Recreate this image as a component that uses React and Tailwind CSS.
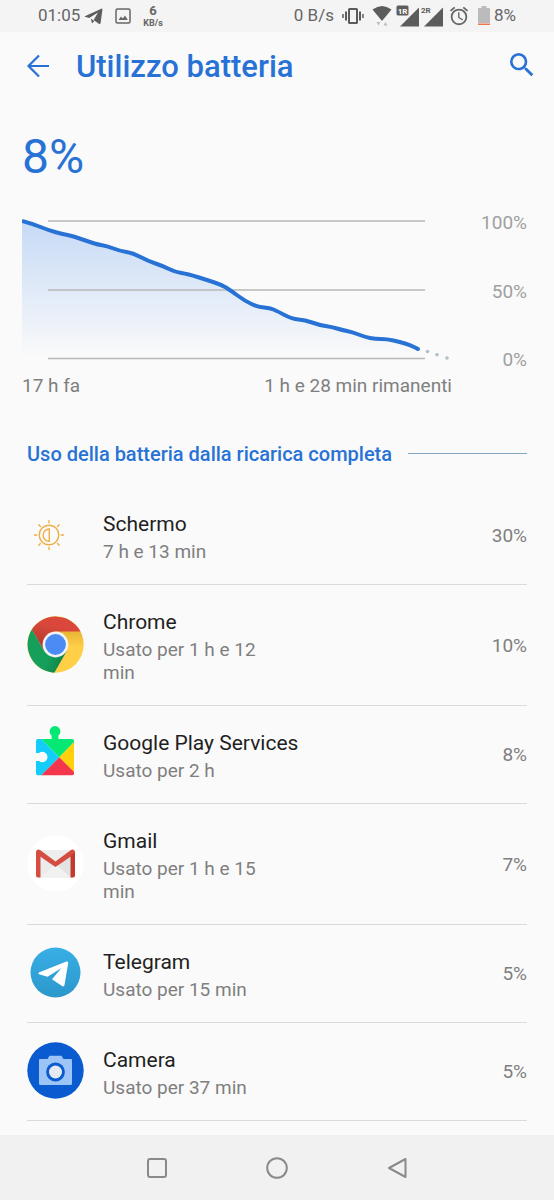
import { MdOutlineAlarm, MdSearch } from 'react-icons/md'

const LEVELS = [
  [0, 4], [11, 7], [26, 13], [40, 17], [51, 19], [73, 27], [85, 29], [98, 34],
  [111, 36], [126, 44], [141, 49], [153, 55], [166, 57], [185, 63], [200, 68],
  [208, 73], [223, 84], [236, 90], [248, 91], [255, 94], [270, 102], [283, 103],
  [297, 108], [310, 110], [320, 113], [330, 115], [343, 120], [353, 122],
  [365, 122], [378, 125], [388, 128], [396, 132],
]

// rounds the corners by curving through the midpoint of each pair of samples
function smoothPath(points) {
  let d = `M${points[0].join(' ')}`
  for (let i = 1; i < points.length - 1; i++) {
    const [x, y] = points[i]
    const [nx, ny] = points[i + 1]
    d += ` Q${x} ${y} ${(x + nx) / 2} ${(y + ny) / 2}`
  }
  return `${d} L${points[points.length - 1].join(' ')}`
}

function ScreenIcon() {
  return (
    <svg viewBox="0 0 44 44" className="w-11 h-11" fill="none" stroke="#eeae45" strokeWidth="1.4" strokeLinecap="round">
      <circle cx="22" cy="22" r="9.8" />
      <path d="M22.3 16v12.4A6.2 6.2 0 0 1 22.3 16z" />
      <path d="M22 7.5v2.3M22 34.2v2.3M7.5 22h2.3M34.2 22h2.3M11.8 11.8l1.6 1.6M30.6 30.6l1.6 1.6M11.8 32.2l1.6-1.6M30.6 13.4l1.6-1.6" />
    </svg>
  )
}

function ChromeIcon() {
  return (
    <svg viewBox="0 0 57 57" className="w-[57px] h-[57px]">
      <defs>
        <linearGradient id="chromeRed" x1="0" y1="1" x2="0.3" y2="0.2">
          <stop offset="0" stopColor="#a8352b" />
          <stop offset="1" stopColor="#da483b" />
        </linearGradient>
        <linearGradient id="chromeGreen" x1="1" y1="0.75" x2="0.55" y2="0.55">
          <stop offset="0" stopColor="#0c7f46" />
          <stop offset="1" stopColor="#169f5b" />
        </linearGradient>
        <linearGradient id="chromeYellow" x1="0" y1="0.27" x2="0" y2="0.55">
          <stop offset="0" stopColor="#e9b535" />
          <stop offset="1" stopColor="#ffcf48" />
        </linearGradient>
      </defs>
      <circle cx="28.5" cy="28.5" r="28.2" fill="url(#chromeYellow)" />
      <path d="M4.9 13.6A28.2 28.2 0 0 1 53.5 15.5H28.5v13L17.2 35z" fill="url(#chromeRed)" />
      <path d="M4.9 13.6 17.2 35l11.3-6.5L39.8 35 27.3 56.7A28.2 28.2 0 0 1 4.9 13.6z" fill="url(#chromeGreen)" />
      <circle cx="28.5" cy="28.5" r="12.9" fill="#f3f3f3" />
      <circle cx="28.5" cy="28.5" r="10.4" fill="#4b8bf4" />
    </svg>
  )
}

function PlayServicesIcon() {
  return (
    <svg viewBox="0 0 57 57" className="w-[57px] h-[57px]">
      <clipPath id="puzzle">
        <path d="M11 14h13.6v-3.4a5.4 5.4 0 1 1 6.8 0V14H45a2 2 0 0 1 2 2v32.5a2 2 0 0 1-2 2H11a2 2 0 0 1-2-2V36h3a5.2 5.2 0 1 0 0-8H9V16a2 2 0 0 1 2-2z" />
      </clipPath>
      <g clipPath="url(#puzzle)">
        <path d="M9 14h5.3L32.3 32.3 14 50.5H9z" fill="#12cdfa" />
        <path d="M14.3 14V0H47v17.3l-14.7 15z" fill="#05e874" />
        <path d="M47 17v30.5L32.3 32.3z" fill="#ffd00b" />
        <path d="M32.3 32.3 47 47v3.5H14z" fill="#f3364b" />
      </g>
    </svg>
  )
}

function GmailIcon() {
  return (
    <svg viewBox="0 0 57 57" className="w-[57px] h-[57px]">
      <circle cx="28.5" cy="28.5" r="28.2" fill="#fff" />
      <path d="M11 15h35v27.5H11z" fill="#e3e3e3" />
      <path d="M13 42.5 28.5 29 44 42.5z" fill="#f1f1f1" />
      <path d="M13 20v22.5L25 31.5z" fill="#ececec" />
      <path d="M13 15h31L28.5 26.5z" fill="#ededed" />
      <path d="M9 17a2.5 2.5 0 0 1 4-2l15.5 11.5L44 15a2.5 2.5 0 0 1 4 2c0 1-.4 1.8-1.2 2.4L28.5 32 10.2 19.4C9.4 18.8 9 18 9 17z" fill="#d54c40" />
      <path d="M9 17v23.5a2 2 0 0 0 2 2h2.5V21z" fill="#d54c40" />
      <path d="M48 17v23.5a2 2 0 0 1-2 2h-2.5V21z" fill="#c13b31" />
    </svg>
  )
}

function TelegramIcon() {
  return (
    <svg viewBox="0 0 57 57" className="w-[57px] h-[57px]">
      <defs>
        <linearGradient id="telegram" x1="0" y1="0" x2="0" y2="1">
          <stop offset="0" stopColor="#38afe6" />
          <stop offset="1" stopColor="#2b97cb" />
        </linearGradient>
      </defs>
      <circle cx="28.5" cy="28.5" r="25" fill="url(#telegram)" />
      <path d="M11.8 28.6 39.4 17.6q2-.6 1.8 1.4L37.5 41q-.6 2.2-2.5 1.1L25 35.2l9.5-11.3-14 8.9-8.5-2.6q-1.3-.7-.2-1.6z" fill="#fff" />
    </svg>
  )
}

function CameraIcon() {
  return (
    <svg viewBox="0 0 57 57" className="w-[57px] h-[57px]">
      <circle cx="28.5" cy="28.5" r="28.2" fill="#0a5bd0" />
      <path d="M13 17h7.5l2-3.3h12l2 3.3H44q1 0 1 1v23.5q0 1.5-1.5 1.5h-30Q12 43 12 41.5V18q0-1 1-1z" fill="#9cc4f6" />
      <circle cx="28.5" cy="30" r="9.4" fill="#0a5bd0" />
      <circle cx="28.5" cy="30" r="6.5" fill="#e6eaee" />
    </svg>
  )
}

const APPS = [
  { name: 'Schermo', usage: '7 h e 13 min', percent: '30%', Icon: ScreenIcon },
  { name: 'Chrome', usage: 'Usato per 1 h e 12 min', percent: '10%', Icon: ChromeIcon },
  { name: 'Google Play Services', usage: 'Usato per 2 h', percent: '8%', Icon: PlayServicesIcon },
  { name: 'Gmail', usage: 'Usato per 1 h e 15 min', percent: '7%', Icon: GmailIcon },
  { name: 'Telegram', usage: 'Usato per 15 min', percent: '5%', Icon: TelegramIcon },
  { name: 'Camera', usage: 'Usato per 37 min', percent: '5%', Icon: CameraIcon },
]

function StatusBar() {
  return (
    <div className="h-8 px-[38px] bg-[#f4f4f4] text-[#666666] text-[17px] flex items-center justify-between">
      <div className="flex items-center">
        <span>01:05</span>
        <svg viewBox="0 0 19 17" className="ml-1 w-[19px] h-[17px]" fill="#5c5c5c">
          <path d="M.3 8.500 17.300.700q1.300-.4 1.100 1L16.600 15q-.4 1.600-1.800.8L9.600 11.900 14 4.500 5.200 9.900z" />
          <path d="M6.800 10.500 8 15.500l2.300-2.500z" />
        </svg>
        <svg viewBox="0 0 16 16" className="ml-3 w-4 h-4" fill="none" stroke="#666666" strokeWidth="1.5">
          <rect x="1" y="1" width="14" height="14" rx="1.5" />
          <path d="M3.5 12 6 8.5l1.800 2L10 7.5l2.800 4.500z" fill="#666666" stroke="none" />
        </svg>
        <div className="ml-3 flex flex-col items-center font-bold">
          <span className="text-[13px] leading-[14px]">6</span>
          <span className="text-[9px] leading-[10px]">KB/s</span>
        </div>
      </div>

      <div className="flex items-center">
        <span>0 B/s</span>
        <svg viewBox="0 0 22 16" className="ml-2 w-[22px] h-4" fill="none" stroke="#5c5c5c" strokeWidth="2">
          <rect x="7" y="1" width="8" height="14" rx="0.5" />
          <path d="M4 3.5v9M18 3.5v9" />
          <path d="M1 6v4M21 6v4" strokeWidth="1.5" />
        </svg>
        <svg viewBox="0 0 20 22" className="ml-2 w-5 h-[22px]">
          <path d="M.5 4.500Q10-2.500 19.500 4.500L10 16z" fill="#5c5c5c" />
          <path d="M4.500 17h4l-2 3.500zM11.500 20.500h4l-2-3.500z" fill="#bdbdbd" />
        </svg>
        <svg viewBox="0 0 24 22" className="ml-1 w-6 h-[22px]">
          <path d="M23 2.500V21.500H4z" fill="#5c5c5c" />
          <rect x="0" y="0" width="13" height="11" rx="2" fill="#5c5c5c" stroke="#f4f4f4" />
          <text x="6.5" y="8.5" textAnchor="middle" fontSize="8" fontWeight="700" fill="#ffffff">1R</text>
        </svg>
        <svg viewBox="0 0 24 22" className="w-6 h-[22px]">
          <path d="M23 2.500V21.500H4z" fill="#5c5c5c" />
          <text x="1" y="7.5" fontSize="8" fontWeight="700" fill="#5c5c5c" stroke="#f4f4f4" strokeWidth="1.5" paintOrder="stroke">2R</text>
        </svg>
        <MdOutlineAlarm className="ml-1 w-[22px] h-[22px]" />
        <svg viewBox="0 0 12 20" className="ml-2 w-3 h-5">
          <path d="M3.500 0h5v2H11q1 0 1 1v14H0V3q0-1 1-1h2.500z" fill="#bbbbbb" />
          <path d="M0 17.500h12V19H0z" fill="#f0734d" />
        </svg>
        <span className="ml-1">8%</span>
      </div>
    </div>
  )
}

function BatteryChart() {
  const line = smoothPath(LEVELS)
  return (
    <div className="grid grid-cols-[1fr_75px] text-[19px] leading-[22px]">
      <svg viewBox="0 -5 430 159" className="w-full h-auto">
        <defs>
          <linearGradient id="level" gradientUnits="userSpaceOnUse" x1="0" y1="4" x2="0" y2="140">
            <stop offset="0" stopColor="#c6daf6" />
            <stop offset="1" stopColor="#fafafa" />
          </linearGradient>
        </defs>
        <path d={`${line} V140 H0 Z`} fill="url(#level)" />
        <path d="M26 4h377M26 73h377M26 141.5h377" stroke="#b8b8b8" strokeWidth="1.4" />
        <path d={line} fill="none" stroke="#2872d6" strokeWidth="4" strokeLinejoin="round" />
        <circle cx="396" cy="132" r="2" fill="#2872d6" />
        <g fill="#b3c0c6">
          <circle cx="405.5" cy="134.5" r="1.8" />
          <circle cx="415" cy="137.8" r="1.8" />
          <circle cx="425" cy="141" r="1.8" />
        </g>
      </svg>
      <div className="flex flex-col justify-between text-right text-[#a0a0a0]">
        <span>100%</span>
        <span>50%</span>
        <span>0%</span>
      </div>
      <div className="mt-1 flex justify-between text-[#7f7f7f]">
        <span>17 h fa</span>
        <span>1 h e 28 min rimanenti</span>
      </div>
    </div>
  )
}

function AppRow({ name, usage, percent, Icon }) {
  return (
    <li className="flex items-center border-b border-[#dadada] pt-[23px] pb-[21px]">
      <div className="w-[76px] -mt-5 -mb-4 shrink-0">
        <Icon />
      </div>
      <div className="flex-1">
        <h3 className="text-[21px] leading-7 text-[#1f1f1f]">{name}</h3>
        <p className="mt-0.5 max-w-[180px] text-[19px] leading-[23px] text-[#7f7f7f]">{usage}</p>
      </div>
      <span className="text-[19px] text-[#7f7f7f]">{percent}</span>
    </li>
  )
}

function NavBar() {
  return (
    <nav className="h-[65px] bg-[#f1f1f1] flex items-center justify-center gap-20">
      <button aria-label="Recenti" className="w-10 h-10 flex items-center justify-center">
        <svg viewBox="0 0 24 24" className="w-6 h-6" fill="none" stroke="#8a8a8a" strokeWidth="2">
          <rect x="3" y="3" width="18" height="18" rx="2" />
        </svg>
      </button>
      <button aria-label="Home" className="w-10 h-10 flex items-center justify-center">
        <svg viewBox="0 0 24 24" className="w-6 h-6" fill="none" stroke="#8a8a8a" strokeWidth="2">
          <circle cx="12" cy="12" r="9.8" />
        </svg>
      </button>
      <button aria-label="Indietro" className="w-10 h-10 flex items-center justify-center">
        <svg viewBox="0 0 24 24" className="w-6 h-6" fill="none" stroke="#8a8a8a" strokeWidth="2" strokeLinejoin="round">
          <path d="M4 12 20.500 3v18z" />
        </svg>
      </button>
    </nav>
  )
}

export default function App() {
  return (
    <div className="min-h-screen bg-[#fafafa] font-[Roboto,sans-serif] flex flex-col">
      <StatusBar />

      <header className="h-[70px] pl-[22px] pr-4 flex items-center text-[#2872d6]">
        <button aria-label="Indietro" className="w-8 h-8 pb-0.5 flex items-center justify-center">
          <svg viewBox="0 0 24 24" className="w-6 h-6" fill="none" stroke="currentColor" strokeWidth="2.200">
            <path d="M23 12H3M13 1.500 2.500 12 13 22.500" />
          </svg>
        </button>
        <h1 className="ml-[22px] flex-1 text-[31px] font-medium">Utilizzo batteria</h1>
        <button aria-label="Cerca" className="pb-1">
          <MdSearch className="w-8 h-8" />
        </button>
      </header>

      <main className="flex-1 pt-[29px] pb-3">
        <section className="pl-[22px] pr-[27px]">
          <p className="mb-[29px] text-[48px] leading-[52px] text-[#2872d6]">8%</p>
          <BatteryChart />
        </section>

        <section className="mt-[45px] px-[27px]">
          <div className="flex items-center gap-4">
            <h2 className="text-[20px] leading-6 font-medium text-[#2872d6]">
              Uso della batteria dalla ricarica completa
            </h2>
            <div className="flex-1 h-px mb-0.5 bg-[#84a9c4]" />
          </div>
          <ul className="mt-[21px]">
            {APPS.map((app) => (
              <AppRow key={app.name} {...app} />
            ))}
          </ul>
        </section>
      </main>

      <NavBar />
    </div>
  )
}
